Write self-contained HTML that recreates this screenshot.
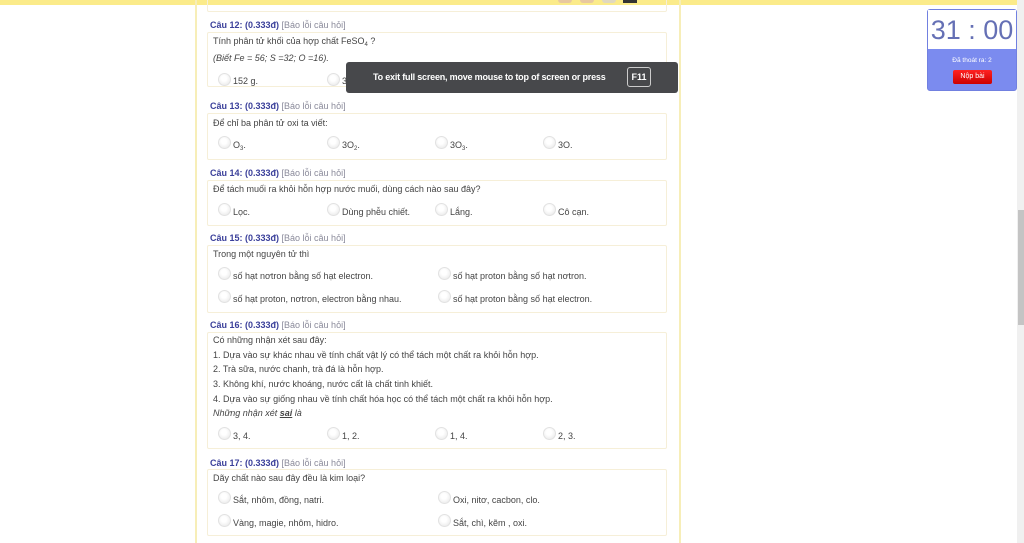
<!DOCTYPE html>
<html><head><meta charset="utf-8"><style>
*{margin:0;padding:0;box-sizing:border-box}
body{width:1024px;height:543px;overflow:hidden;background:#fff;position:relative;font-family:"Liberation Sans",sans-serif;font-size:9px;color:#444}
.a{position:absolute;white-space:nowrap}
.h{color:#3a3f9a;font-weight:bold;font-size:9px}
.h span{color:#8a8a9a;font-weight:normal}
.box{position:absolute;left:207px;width:460px;border:1px solid #f6efd8;border-radius:2px}
.r{position:absolute;width:13px;height:13px;border-radius:50%;background:radial-gradient(circle at 45% 40%,#fff 30%,#e4e4e4 100%);border:1px solid #e2e2e2}
.t{position:absolute;white-space:nowrap;font-size:9px;color:#444}
sub{font-size:6px;vertical-align:-2px;line-height:0}
</style></head><body>
<div class="a" style="left:0;top:0;width:1017px;height:5px;background:#fbeb8a"></div>
<div class="a" style="left:558px;top:0;width:14px;height:3px;background:#e8c8a0;border-radius:0 0 3px 3px"></div>
<div class="a" style="left:580px;top:0;width:14px;height:3px;background:#e8c8a0;border-radius:0 0 3px 3px"></div>
<div class="a" style="left:602px;top:0;width:14px;height:3px;background:#e0d8c0;border-radius:0 0 3px 3px"></div>
<div class="a" style="left:623px;top:0;width:14px;height:3px;background:#333"></div>
<div class="a" style="left:195px;top:0;width:2px;height:543px;background:#f7eeb8"></div>
<div class="a" style="left:679px;top:0;width:2px;height:543px;background:#f7eeb8"></div>
<div class="a" style="left:1017px;top:0;width:7px;height:543px;background:#f0f0f0"></div>
<div class="a" style="left:1018px;top:210px;width:6px;height:115px;background:#c4c4c4"></div>
<div class="box" style="top:-4px;height:16px"></div>

<div class="a h" style="left:210px;top:20px">Câu 12: (0.333đ) <span>[Báo lỗi câu hỏi]</span></div>
<div class="box" style="top:32px;height:55px"></div>
<div class="t" style="left:213px;top:36px">Tính phân tử khối của hợp chất FeSO<sub>4</sub> ?</div>
<div class="t" style="left:213px;top:53px;font-style:italic">(Biết Fe = 56; S =32; O =16).</div>
<div class="r" style="left:218px;top:73px"></div><div class="t" style="left:233px;top:76px">152 g.</div>
<div class="r" style="left:327px;top:73px"></div><div class="t" style="left:342px;top:76px">342 đvC.</div>

<div class="a h" style="left:210px;top:101px">Câu 13: (0.333đ) <span>[Báo lỗi câu hỏi]</span></div>
<div class="box" style="top:113px;height:47px"></div>
<div class="t" style="left:213px;top:118px">Để chỉ ba phân tử oxi ta viết:</div>
<div class="r" style="left:218px;top:136px"></div><div class="t" style="left:233px;top:140px">O<sub>3</sub>.</div>
<div class="r" style="left:327px;top:136px"></div><div class="t" style="left:342px;top:140px">3O<sub>2</sub>.</div>
<div class="r" style="left:435px;top:136px"></div><div class="t" style="left:450px;top:140px">3O<sub>3</sub>.</div>
<div class="r" style="left:543px;top:136px"></div><div class="t" style="left:558px;top:140px">3O.</div>

<div class="a h" style="left:210px;top:168px">Câu 14: (0.333đ) <span>[Báo lỗi câu hỏi]</span></div>
<div class="box" style="top:180px;height:46px"></div>
<div class="t" style="left:213px;top:184px">Để tách muối ra khỏi hỗn hợp nước muối, dùng cách nào sau đây?</div>
<div class="r" style="left:218px;top:203px"></div><div class="t" style="left:233px;top:207px">Lọc.</div>
<div class="r" style="left:327px;top:203px"></div><div class="t" style="left:342px;top:207px">Dùng phễu chiết.</div>
<div class="r" style="left:435px;top:203px"></div><div class="t" style="left:450px;top:207px">Lắng.</div>
<div class="r" style="left:543px;top:203px"></div><div class="t" style="left:558px;top:207px">Cô cạn.</div>

<div class="a h" style="left:210px;top:233px">Câu 15: (0.333đ) <span>[Báo lỗi câu hỏi]</span></div>
<div class="box" style="top:245px;height:68px"></div>
<div class="t" style="left:213px;top:249px">Trong một nguyên tử thì</div>
<div class="r" style="left:218px;top:267px"></div><div class="t" style="left:233px;top:271px">số hạt nơtron bằng số hạt electron.</div>
<div class="r" style="left:438px;top:267px"></div><div class="t" style="left:453px;top:271px">số hạt proton bằng số hạt nơtron.</div>
<div class="r" style="left:218px;top:290px"></div><div class="t" style="left:233px;top:294px">số hạt proton, nơtron, electron bằng nhau.</div>
<div class="r" style="left:438px;top:290px"></div><div class="t" style="left:453px;top:294px">số hạt proton bằng số hạt electron.</div>

<div class="a h" style="left:210px;top:320px">Câu 16: (0.333đ) <span>[Báo lỗi câu hỏi]</span></div>
<div class="box" style="top:332px;height:117px"></div>
<div class="t" style="left:213px;top:335px">Có những nhận xét sau đây:</div>
<div class="t" style="left:213px;top:350px">1. Dựa vào sự khác nhau về tính chất vật lý có thể tách một chất ra khỏi hỗn hợp.</div>
<div class="t" style="left:213px;top:364px">2. Trà sữa, nước chanh, trà đá là hỗn hợp.</div>
<div class="t" style="left:213px;top:379px">3. Không khí, nước khoáng, nước cất là chất tinh khiết.</div>
<div class="t" style="left:213px;top:394px">4. Dựa vào sự giống nhau về tính chất hóa học có thể tách một chất ra khỏi hỗn hợp.</div>
<div class="t" style="left:213px;top:408px;font-style:italic">Những nhận xét <b><u>sai</u></b> là</div>
<div class="r" style="left:218px;top:427px"></div><div class="t" style="left:233px;top:431px">3, 4.</div>
<div class="r" style="left:327px;top:427px"></div><div class="t" style="left:342px;top:431px">1, 2.</div>
<div class="r" style="left:435px;top:427px"></div><div class="t" style="left:450px;top:431px">1, 4.</div>
<div class="r" style="left:543px;top:427px"></div><div class="t" style="left:558px;top:431px">2, 3.</div>

<div class="a h" style="left:210px;top:458px">Câu 17: (0.333đ) <span>[Báo lỗi câu hỏi]</span></div>
<div class="box" style="top:469px;height:67px"></div>
<div class="t" style="left:213px;top:473px">Dãy chất nào sau đây đều là kim loại?</div>
<div class="r" style="left:218px;top:491px"></div><div class="t" style="left:233px;top:495px">Sắt, nhôm, đồng, natri.</div>
<div class="r" style="left:438px;top:491px"></div><div class="t" style="left:453px;top:495px">Oxi, nitơ, cacbon, clo.</div>
<div class="r" style="left:218px;top:514px"></div><div class="t" style="left:233px;top:518px">Vàng, magie, nhôm, hidro.</div>
<div class="r" style="left:438px;top:514px"></div><div class="t" style="left:453px;top:518px">Sắt, chì, kẽm , oxi.</div>

<div class="a" style="left:346px;top:62px;width:332px;height:31px;background:#47484b;border-radius:3px"></div>
<div class="a" style="left:373px;top:72px;color:#fff;font-weight:bold;font-size:9px;letter-spacing:-0.2px">To exit full screen, move mouse to top of screen or press</div>
<div class="a" style="left:627px;top:67px;width:24px;height:20px;border:1px solid #ccc;border-radius:3px;color:#fff;font-weight:bold;font-size:9px;text-align:center;line-height:18px">F11</div>

<div class="a" style="left:927px;top:9px;width:90px;height:82px;background:#7b8bef;border-radius:3px;border:1px solid #7180e0"></div>
<div class="a" style="left:928px;top:10px;width:88px;height:39px;background:#fff;color:#6570b5;font-size:27px;text-align:center;line-height:40px">31 : 00</div>
<div class="a" style="left:927px;top:57px;width:90px;text-align:center;color:#fff;font-size:6.5px">Đã thoát ra: 2</div>
<div class="a" style="left:953px;top:70px;width:39px;height:14px;background:linear-gradient(#f22,#c00);border-radius:2px;color:#fff;font-size:7px;text-align:center;line-height:14px">Nộp bài</div>
</body></html>
